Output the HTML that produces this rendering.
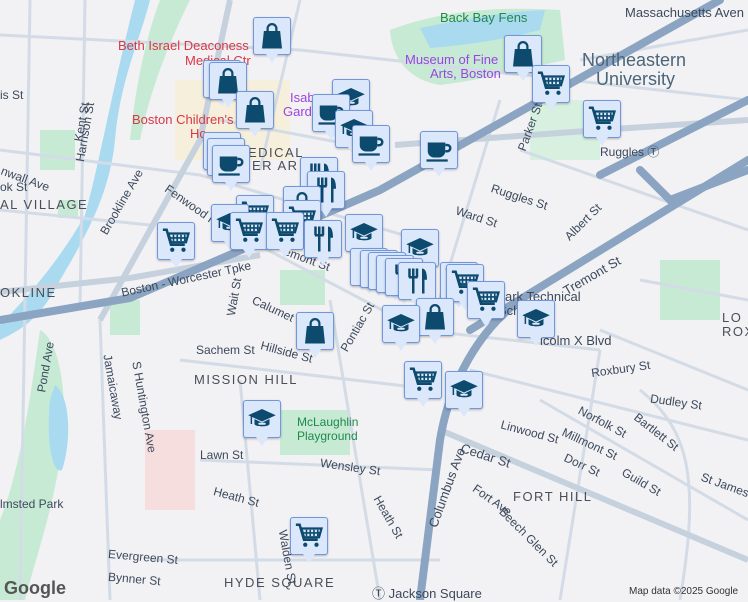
<!DOCTYPE html>
<html><head><meta charset="utf-8"><style>
body{margin:0;width:748px;height:600px;overflow:hidden;background:#f2f1f4;font-family:"Liberation Sans",sans-serif}
#map{position:absolute;left:0;top:0}
.m{position:absolute;width:36px;height:36px;background:#dbe7fb;border:1px solid #7096dc;border-radius:3px;box-shadow:0 1px 2px rgba(0,0,0,.25)}
.m:after{content:"";position:absolute;left:12px;top:36px;border-left:6px solid transparent;border-right:6px solid transparent;border-top:9px solid #dbe7fb}
.m svg{position:absolute;left:3px;top:3px;width:30px;height:30px}
.l{position:absolute;font-size:12px;color:#3c4a5c;white-space:nowrap}
.d{position:absolute;font-size:13px;color:#4a4f57;letter-spacing:1.5px;white-space:nowrap}
</style></head><body>
<svg id="map" width="748" height="600" viewBox="0 0 748 600">
<defs>
<symbol id="cart" viewBox="0 0 24 24"><path d="M1.5 3h3l3.5 12h11" fill="none" stroke="#0c4a6e" stroke-width="2"/><path d="M6 6h16l-2 7H8z" fill="none" stroke="#0c4a6e" stroke-width="1.8"/><path d="M10 7v5M13 7v5M16 7v5M19 7v5M7 9.5h14" stroke="#0c4a6e" stroke-width="1.3"/><circle cx="9" cy="19" r="1.7" fill="#0c4a6e"/><circle cx="18" cy="19" r="1.7" fill="#0c4a6e"/></symbol>
<symbol id="bag" viewBox="0 0 24 24"><path d="M5.5 8h13l1.5 14H4z" fill="#0c4a6e"/><path d="M8.5 9V6a3.5 3.5 0 0 1 7 0v3" fill="none" stroke="#0c4a6e" stroke-width="1.8"/></symbol>
<symbol id="cup" viewBox="0 0 24 24"><path d="M3 6h14v7a5 5 0 0 1-5 5H8a5 5 0 0 1-5-5z" fill="#0c4a6e"/><path d="M17 8h1.5a2.5 2.5 0 0 1 0 5H17" fill="none" stroke="#0c4a6e" stroke-width="2"/><rect x="2" y="19.5" width="17" height="1.8" fill="#0c4a6e"/></symbol>
<symbol id="grad" viewBox="0 0 24 24"><path d="M1 9l11-5 11 5-11 5z" fill="#0c4a6e"/><path d="M6 12v4c0 2.5 12 2.5 12 0v-4l-6 3z" fill="#0c4a6e"/><path d="M3.5 10v6" stroke="#0c4a6e" stroke-width="1.2"/><rect x="9" y="15" width="6" height="1.6" rx=".8" fill="#dbe7fb"/></symbol>
<symbol id="food" viewBox="0 0 24 24"><path d="M6 2v7M9 2v7M12 2v7M5.5 9h7M9 9v13" stroke="#0c4a6e" stroke-width="2" fill="none"/><path d="M16 2c3 0 4 4 4 9h-2v11h-2z" fill="#0c4a6e"/></symbol>
</defs>
<!-- water / parks -->
<path d="M150 0 C140 40 120 80 115 140 C110 190 90 230 60 280 C40 320 20 330 0 340 L0 325 C25 300 60 260 85 215 C100 160 110 100 135 0z" fill="#aadaf0"/>
<path d="M160 0 L190 0 C170 40 150 90 140 140 L130 140 C135 90 145 40 160 0z" fill="#c6ead3"/>
<path d="M40 330 C60 340 70 400 60 460 C50 520 35 560 25 600 L0 600 L0 520 C20 470 30 400 40 330z" fill="#c6ead3"/>
<path d="M55 385 C70 395 72 440 62 470 C52 475 46 440 50 400z" fill="#aadaf0"/>
<path d="M390 30 C430 15 480 5 560 10 L565 60 C520 70 480 80 440 85 C410 80 392 60 390 30z" fill="#c6ead3"/>
<path d="M420 28 C460 20 500 12 545 10 L540 30 C500 40 470 45 430 48z" fill="#aadaf0"/>
<rect x="40" y="130" width="35" height="40" fill="#c6ead3"/>
<rect x="42" y="385" width="0" height="0"/>
<rect x="58" y="200" width="20" height="18" fill="#c6ead3"/>
<rect x="280" y="410" width="70" height="45" fill="#c6ead3"/>
<rect x="280" y="270" width="45" height="35" fill="#c6ead3"/>
<rect x="145" y="430" width="50" height="80" fill="#f7dede"/>
<rect x="175" y="80" width="115" height="80" fill="#f6efdc"/>
<rect x="110" y="300" width="30" height="35" fill="#c6ead3"/>
<rect x="660" y="260" width="60" height="60" fill="#c6ead3"/>
<rect x="530" y="100" width="70" height="60" fill="#d7f0df"/>
<!-- minor roads -->
<g stroke="#d3dce6" stroke-width="3" fill="none">
<path d="M0 35 L300 50 L748 100"/><path d="M30 0 L20 600"/><path d="M85 0 L80 310"/>
<path d="M0 150 L200 175 L420 240"/><path d="M0 210 L150 225"/><path d="M230 230 L420 330 L600 350"/>
<path d="M180 360 L440 390"/><path d="M200 460 L440 470"/><path d="M150 560 L440 560"/>
<path d="M330 300 L380 600"/><path d="M240 380 L260 600"/><path d="M100 320 L110 600"/>
<path d="M540 400 L748 520"/><path d="M470 370 L748 440"/><path d="M600 330 L748 390"/>
<path d="M600 350 L560 600"/><path d="M640 280 L748 300"/><path d="M520 150 L748 230"/>
<path d="M500 100 L430 330"/><path d="M300 0 L260 170"/><path d="M580 60 L748 30"/>
<path d="M220 120 L380 150"/><path d="M640 390 C690 430 700 480 680 600"/>
</g>
<g stroke="#c6d1de" stroke-width="6" fill="none">
<path d="M0 292 L130 278 L260 255"/><path d="M100 320 L200 140 L230 0"/><path d="M440 430 L748 560"/>
<path d="M395 145 L600 130 L748 120"/>
</g>
<!-- major roads -->
<g stroke="#8aa4c2" stroke-width="8" fill="none" stroke-linecap="round">
<path d="M0 320 L130 298 L380 190 L720 0"/>
<path d="M520 300 C480 330 450 380 440 440 C432 500 425 560 420 600"/>
<path d="M470 330 L748 160"/><path d="M600 175 L748 100"/><path d="M640 170 L670 200 L748 170"/>
</g>
</svg>
<div class="l" style="left:440px;top:10px;color:#1f8a4c;font-size:13px">Back Bay Fens</div>
<div class="l" style="left:625px;top:5px;font-size:13px">Massachusetts Aven</div>
<div class="l" style="left:582px;top:50px;font-size:18px;color:#4b6579">Northeastern</div>
<div class="l" style="left:596px;top:69px;font-size:18px;color:#4b6579">University</div>
<div class="l" style="left:405px;top:52px;color:#9b45e0;font-size:13px">Museum of Fine</div>
<div class="l" style="left:430px;top:66px;color:#9b45e0;font-size:13px">Arts, Boston</div>
<div class="l" style="left:290px;top:90px;color:#9b45e0;font-size:13px">Isab</div>
<div class="l" style="left:283px;top:104px;color:#9b45e0;font-size:13px">Gard</div>
<div class="l" style="left:118px;top:38px;color:#d93845;font-size:13px">Beth Israel Deaconess</div>
<div class="l" style="left:185px;top:53px;color:#d93845;font-size:13px">Medical Ctr</div>
<div class="l" style="left:132px;top:112px;color:#d93845;font-size:13px">Boston Children's</div>
<div class="l" style="left:190px;top:126px;color:#d93845;font-size:13px">Ho</div>
<div class="d" style="left:248px;top:145px">EDICAL</div>
<div class="d" style="left:252px;top:158px">ER AR</div>
<div class="d" style="left:0;top:197px">AL VILLAGE</div>
<div class="d" style="left:0;top:285px">OKLINE</div>
<div class="d" style="left:194px;top:372px">MISSION HILL</div>
<div class="d" style="left:513px;top:489px">FORT HILL</div>
<div class="d" style="left:224px;top:575px">HYDE SQUARE</div>
<div class="d" style="left:722px;top:310px">LO</div>
<div class="d" style="left:722px;top:324px">ROX</div>
<div class="l" style="left:600px;top:143px">Ruggles Ⓣ</div>
<div class="l" style="left:490px;top:190px;transform:rotate(18deg)">Ruggles St</div>
<div class="l" style="left:455px;top:210px;transform:rotate(18deg)">Ward St</div>
<div class="l" style="left:505px;top:120px;transform:rotate(-70deg)">Parker St</div>
<div class="l" style="left:560px;top:215px;transform:rotate(-45deg)">Albert St</div>
<div class="l" style="left:560px;top:268px;transform:rotate(-30deg);font-size:13px">Tremont St</div>
<div class="l" style="left:505px;top:289px;font-size:13px">ark Technical</div>
<div class="l" style="left:485px;top:303px;font-size:13px">H      School</div>
<div class="l" style="left:540px;top:333px;font-size:13px">lcolm X Blvd</div>
<div class="l" style="left:591px;top:362px;transform:rotate(-8deg)">Roxbury St</div>
<div class="l" style="left:650px;top:395px;transform:rotate(8deg)">Dudley St</div>
<div class="l" style="left:500px;top:425px;transform:rotate(15deg)">Linwood St</div>
<div class="l" style="left:560px;top:437px;transform:rotate(25deg)">Millmont St</div>
<div class="l" style="left:563px;top:458px;transform:rotate(25deg)">Dorr St</div>
<div class="l" style="left:576px;top:415px;transform:rotate(28deg)">Norfolk St</div>
<div class="l" style="left:630px;top:425px;transform:rotate(38deg)">Bartlett St</div>
<div class="l" style="left:620px;top:475px;transform:rotate(30deg)">Guild St</div>
<div class="l" style="left:700px;top:478px;transform:rotate(20deg)">St James</div>
<div class="l" style="left:460px;top:448px;transform:rotate(18deg);font-size:13px">Cedar St</div>
<div class="l" style="left:405px;top:480px;transform:rotate(-70deg);font-size:13px">Columbus Ave</div>
<div class="l" style="left:470px;top:493px;transform:rotate(35deg)">Fort Ave</div>
<div class="l" style="left:490px;top:530px;transform:rotate(45deg)">Beech Glen St</div>
<div class="l" style="left:372px;top:583px;font-size:13px">Ⓣ Jackson Square</div>
<div class="l" style="left:629px;top:586px;font-size:10px;color:#333">Map data ©2025 Google</div>
<div class="l" style="left:4px;top:578px;font-size:18px;font-weight:bold;color:#555">Google</div>
<div class="l" style="left:0;top:578px;font-size:12px;color:#333"></div>
<div class="l" style="left:297px;top:415px;color:#1f8a4c">McLaughlin</div>
<div class="l" style="left:297px;top:429px;color:#1f8a4c">Playground</div>
<div class="l" style="left:196px;top:343px">Sachem St</div>
<div class="l" style="left:260px;top:345px;transform:rotate(15deg)">Hillside St</div>
<div class="l" style="left:250px;top:305px;transform:rotate(25deg)">Calumet St</div>
<div class="l" style="left:330px;top:320px;transform:rotate(-60deg)">Pontiac St</div>
<div class="l" style="left:120px;top:272px;transform:rotate(-12deg)">Boston - Worcester Tpke</div>
<div class="l" style="left:283px;top:252px;transform:rotate(20deg)">emont St</div>
<div class="l" style="left:85px;top:195px;transform:rotate(-60deg)">Brookline Ave</div>
<div class="l" style="left:160px;top:200px;transform:rotate(35deg)">Fenwood Rd</div>
<div class="l" style="left:55px;top:125px;transform:rotate(-80deg)">Harrison St</div>
<div class="l" style="left:62px;top:115px;transform:rotate(-80deg)">Kent St</div>
<div class="l" style="left:0;top:88px">is St</div>
<div class="l" style="left:0;top:172px;transform:rotate(20deg)">nwall Ave</div>
<div class="l" style="left:0;top:180px">ok St</div>
<div class="l" style="left:80px;top:380px;transform:rotate(80deg)">Jamaicaway</div>
<div class="l" style="left:98px;top:400px;transform:rotate(80deg)">S Huntington Ave</div>
<div class="l" style="left:20px;top:360px;transform:rotate(-80deg)">Pond Ave</div>
<div class="l" style="left:0;top:497px">lmsted Park</div>
<div class="l" style="left:200px;top:448px">Lawn St</div>
<div class="l" style="left:213px;top:490px;transform:rotate(15deg)">Heath St</div>
<div class="l" style="left:320px;top:460px;transform:rotate(8deg)">Wensley St</div>
<div class="l" style="left:365px;top:510px;transform:rotate(60deg)">Heath St</div>
<div class="l" style="left:108px;top:550px;transform:rotate(5deg)">Evergreen St</div>
<div class="l" style="left:108px;top:572px;transform:rotate(5deg)">Bynner St</div>
<div class="l" style="left:260px;top:550px;transform:rotate(80deg)">Walden St</div>
<div class="l" style="left:215px;top:290px;transform:rotate(-80deg)">Wait St</div>

<div class="m" style="left:253px;top:17px"><svg><use href="#bag"/></svg></div>
<div class="m" style="left:203px;top:60px"><svg><use href="#bag"/></svg></div>
<div class="m" style="left:209px;top:62px"><svg><use href="#bag"/></svg></div>
<div class="m" style="left:236px;top:91px"><svg><use href="#bag"/></svg></div>
<div class="m" style="left:504px;top:35px"><svg><use href="#bag"/></svg></div>
<div class="m" style="left:532px;top:65px"><svg><use href="#cart"/></svg></div>
<div class="m" style="left:583px;top:100px"><svg><use href="#cart"/></svg></div>
<div class="m" style="left:332px;top:79px"><svg><use href="#grad"/></svg></div>
<div class="m" style="left:312px;top:94px"><svg><use href="#cup"/></svg></div>
<div class="m" style="left:335px;top:110px"><svg><use href="#grad"/></svg></div>
<div class="m" style="left:352px;top:125px"><svg><use href="#cup"/></svg></div>
<div class="m" style="left:420px;top:131px"><svg><use href="#cup"/></svg></div>
<div class="m" style="left:203px;top:132px"><svg><use href="#cup"/></svg></div>
<div class="m" style="left:207px;top:138px"><svg><use href="#cup"/></svg></div>
<div class="m" style="left:212px;top:145px"><svg><use href="#cup"/></svg></div>
<div class="m" style="left:300px;top:157px"><svg><use href="#food"/></svg></div>
<div class="m" style="left:307px;top:171px"><svg><use href="#food"/></svg></div>
<div class="m" style="left:283px;top:186px"><svg><use href="#bag"/></svg></div>
<div class="m" style="left:236px;top:195px"><svg><use href="#cart"/></svg></div>
<div class="m" style="left:283px;top:200px"><svg><use href="#cart"/></svg></div>
<div class="m" style="left:211px;top:204px"><svg><use href="#grad"/></svg></div>
<div class="m" style="left:230px;top:212px"><svg><use href="#cart"/></svg></div>
<div class="m" style="left:266px;top:212px"><svg><use href="#cart"/></svg></div>
<div class="m" style="left:304px;top:220px"><svg><use href="#food"/></svg></div>
<div class="m" style="left:345px;top:214px"><svg><use href="#grad"/></svg></div>
<div class="m" style="left:157px;top:222px"><svg><use href="#cart"/></svg></div>
<div class="m" style="left:401px;top:229px"><svg><use href="#grad"/></svg></div>
<div class="m" style="left:350px;top:248px"><svg><use href="#food"/></svg></div>
<div class="m" style="left:360px;top:250px"><svg><use href="#food"/></svg></div>
<div class="m" style="left:368px;top:252px"><svg><use href="#food"/></svg></div>
<div class="m" style="left:376px;top:255px"><svg><use href="#food"/></svg></div>
<div class="m" style="left:385px;top:258px"><svg><use href="#food"/></svg></div>
<div class="m" style="left:440px;top:262px"><svg><use href="#cart"/></svg></div>
<div class="m" style="left:446px;top:264px"><svg><use href="#cart"/></svg></div>
<div class="m" style="left:398px;top:262px"><svg><use href="#food"/></svg></div>
<div class="m" style="left:467px;top:281px"><svg><use href="#cart"/></svg></div>
<div class="m" style="left:296px;top:312px"><svg><use href="#bag"/></svg></div>
<div class="m" style="left:416px;top:298px"><svg><use href="#bag"/></svg></div>
<div class="m" style="left:382px;top:305px"><svg><use href="#grad"/></svg></div>
<div class="m" style="left:517px;top:300px"><svg><use href="#grad"/></svg></div>
<div class="m" style="left:404px;top:361px"><svg><use href="#cart"/></svg></div>
<div class="m" style="left:445px;top:371px"><svg><use href="#grad"/></svg></div>
<div class="m" style="left:243px;top:400px"><svg><use href="#grad"/></svg></div>
<div class="m" style="left:290px;top:517px"><svg><use href="#cart"/></svg></div>
</body></html>
